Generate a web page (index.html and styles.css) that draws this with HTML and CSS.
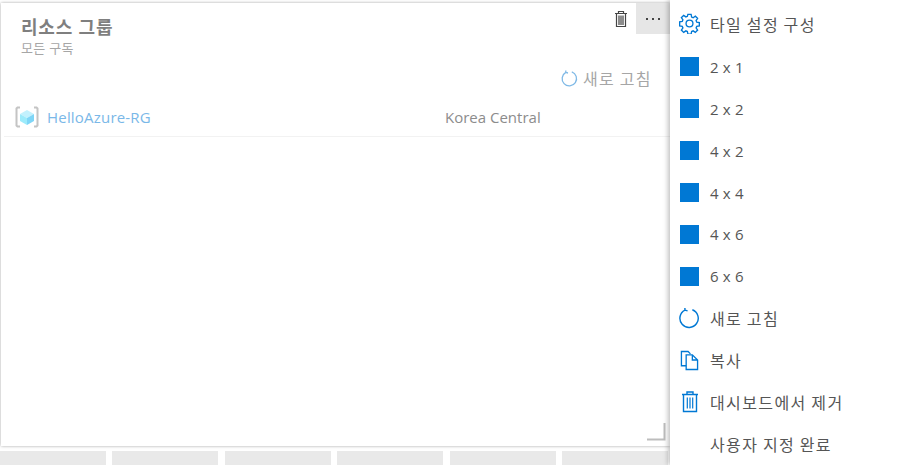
FILE: index.html
```html
<!DOCTYPE html>
<html lang="ko">
<head>
    <meta charset="UTF-8">
    <meta name="viewport" content="width=device-width, initial-scale=1.0">
    <title>리소스 그룹</title>
    <link rel="stylesheet" href="styles.css">
</head>
<body>
    <div class="page">
        <div class="board">
            <div class="tile">
                <div class="tile-actions">
                    <button class="tile-btn">
                        <svg width="16" height="18" viewBox="0 0 16 18">
                            <path d="M2 3.5h12M5.5 3.5V1.5h5v2M3.5 3.5v13h9v-13" fill="none" stroke="#444" stroke-width="1.2"/>
                            <rect x="5" y="5.5" width="6" height="9.5" fill="#8c8c8c"/>
                        </svg>
                    </button>
                    <button class="tile-btn tile-btn-active">
                        <span class="dots"><i></i><i></i><i></i></span>
                    </button>
                </div>
                <div class="tile-head">
                    <h2>리소스 그룹</h2>
                    <p>모든 구독</p>
                </div>
                <div class="refresh-row">
                    <svg width="17" height="17" viewBox="0 0 17 17">
                        <path d="M4.8 2.4A7.2 7.2 0 1 0 10.8 1.9M4.8 2.4V0.4M4.8 2.4L7 3" fill="none" stroke="#7fb9e6" stroke-width="1.3"/>
                    </svg>
                    <span>새로 고침</span>
                </div>
                <div class="res-row">
                    <svg class="res-icon" width="24" height="22" viewBox="0 0 24 22">
                        <path d="M5 1.5H2.5L1.5 2.5V19.5L2.5 20.5H5M19 1.5H21.5L22.5 2.5V19.5L21.5 20.5H19" fill="none" stroke="#c4c4c4" stroke-width="2"/>
                        <path d="M12 4L19 8L12 12L5 8Z" fill="#c3f1fd"/>
                        <path d="M5 8L12 12V19L5 15Z" fill="#9debfb"/>
                        <path d="M19 8L12 12V19L19 15Z" fill="#7fd6f7"/>
                    </svg>
                    <a class="res-name">HelloAzure-RG</a>
                    <span class="res-loc">Korea Central</span>
                </div>
                <svg class="resize-grip" width="19" height="18" viewBox="0 0 19 18">
                    <path d="M0 16.5H17.5V0" fill="none" stroke="#bdbdbd" stroke-width="2"/>
                </svg>
            </div>
            <div class="slots">
                <div class="slot"></div>
                <div class="slot"></div>
                <div class="slot"></div>
                <div class="slot"></div>
                <div class="slot"></div>
                <div class="slot"></div>
            </div>
        </div>

        <ul class="menu">
            <li>
                <span class="menu-icon">
                    <svg width="21" height="21" viewBox="0 0 22 22">
                        <path d="M9.3 1.5h3.4l.5 2.7 1.6.7 2.3-1.6 2.4 2.4-1.6 2.3.7 1.6 2.7.5v3.4l-2.7.5-.7 1.6 1.6 2.3-2.4 2.4-2.3-1.6-1.6.7-.5 2.7H9.3l-.5-2.7-1.6-.7-2.3 1.6-2.4-2.4 1.6-2.3-.7-1.6-2.7-.5V9.3l2.7-.5.7-1.6-1.6-2.3 2.4-2.4 2.3 1.6 1.6-.7z" fill="none" stroke="#0078d4" stroke-width="1.4"/>
                        <circle cx="11" cy="11" r="3.6" fill="none" stroke="#0078d4" stroke-width="1.4"/>
                    </svg>
                </span>
                타일 설정 구성
            </li>
            <li class="size-item"><span class="menu-icon"><span class="square"></span></span>2 x 1</li>
            <li class="size-item"><span class="menu-icon"><span class="square"></span></span>2 x 2</li>
            <li class="size-item"><span class="menu-icon"><span class="square"></span></span>4 x 2</li>
            <li class="size-item"><span class="menu-icon"><span class="square"></span></span>4 x 4</li>
            <li class="size-item"><span class="menu-icon"><span class="square"></span></span>4 x 6</li>
            <li class="size-item"><span class="menu-icon"><span class="square"></span></span>6 x 6</li>
            <li>
                <span class="menu-icon">
                    <svg width="21" height="21" viewBox="0 0 22 22">
                        <path d="M6.2 2.2A9.6 9.6 0 1 0 14 1.8M6.2 2.2V0M6.2 2.2L9 3" fill="none" stroke="#0078d4" stroke-width="1.5"/>
                    </svg>
                </span>
                새로 고침
            </li>
            <li>
                <span class="menu-icon">
                    <svg width="19" height="21" viewBox="0 0 20 22">
                        <path d="M6.5 16.5H1.5V1.5H8.5L11 4" fill="none" stroke="#0078d4" stroke-width="1.4"/>
                        <path d="M6.5 5H13L18.5 10.5V20.5H6.5Z M13 5V10.5H18.5" fill="none" stroke="#0078d4" stroke-width="1.4"/>
                    </svg>
                </span>
                복사
            </li>
            <li>
                <span class="menu-icon">
                    <svg width="18" height="22" viewBox="0 0 18 22">
                        <path d="M1 3.5H17M6 3.5V1H12V3.5M2.5 3.5V20.5H15.5V3.5" fill="none" stroke="#0078d4" stroke-width="1.4"/>
                        <path d="M6.3 6.5V17.5M9 6.5V17.5M11.7 6.5V17.5" fill="none" stroke="#0078d4" stroke-width="1.2"/>
                    </svg>
                </span>
                대시보드에서 제거
            </li>
            <li><span class="menu-icon"></span>사용자 지정 완료</li>
        </ul>
    </div>
</body>
</html>
```

FILE: styles.css
```css
* {
    margin: 0;
    padding: 0;
    box-sizing: border-box;
}

html, body {
    width: 912px;
    height: 465px;
    overflow: hidden;
    background: #fff;
}

body {
    font-family: "Open Sans", "Noto Sans CJK KR", sans-serif;
    color: #444;
}

.page {
    display: flex;
    height: 465px;
}

.board {
    width: 670px;
    flex-shrink: 0;
    padding-top: 3px;
}

.tile {
    position: relative;
    height: 443px;
    margin-left: 1px;
    background: #fff;
    box-shadow: 0 0 3px rgba(0, 0, 0, 0.35);
}

.tile-actions {
    position: absolute;
    top: 0;
    right: 0;
    display: flex;
}

.tile-btn {
    width: 31px;
    height: 31px;
    border: none;
    background: none;
    display: flex;
    align-items: center;
    justify-content: center;
}

.tile-btn-active {
    width: 34px;
    background: #e6e6e6;
}

.dots {
    display: flex;
    gap: 4px;
}

.dots i {
    width: 2px;
    height: 2px;
    background: #444;
}

.tile-head {
    padding: 12px 0 0 20px;
    height: 60px;
}

.tile-head h2 {
    font-size: 18px;
    line-height: 24px;
    font-weight: 700;
    letter-spacing: 0.8px;
    color: #7f7f7f;
}

.tile-head p {
    font-size: 13px;
    line-height: 18px;
    letter-spacing: 0.3px;
    color: #a6a6a6;
}

.refresh-row {
    display: flex;
    justify-content: flex-end;
    align-items: center;
    gap: 5px;
    height: 30px;
    padding-right: 18px;
    font-size: 16px;
    letter-spacing: 1.4px;
    word-spacing: -1px;
    color: #a6a6a6;
}

.res-row {
    display: flex;
    align-items: center;
    height: 40px;
    margin: 4px 0 0 3px;
    padding: 1px 0 0 11px;
    border-bottom: 1px solid #f2f2f2;
    font-size: 15px;
}

.res-icon {
    margin-right: 8px;
}

.res-name {
    width: 398px;
    letter-spacing: 0.2px;
    color: #7ab8e8;
}

.res-loc {
    color: #8c8c8c;
}

.resize-grip {
    position: absolute;
    right: 4px;
    bottom: 5px;
}

.slots {
    display: flex;
    gap: 6.4px;
    margin-top: 5px;
}

.slot {
    width: 106px;
    height: 14px;
    background: #e9e9e9;
}

.menu {
    position: relative;
    flex: 1;
    list-style: none;
    padding-top: 3px;
    background: #fff;
    box-shadow: -2px 0 5px rgba(0, 0, 0, 0.25);
    font-size: 16px;
    letter-spacing: 1.4px;
    word-spacing: -1px;
    color: #555;
}

.menu li {
    display: flex;
    align-items: center;
    height: 41.9px;
    padding-left: 9px;
}

.menu li:first-child {
    margin-bottom: 1px;
}

.menu .size-item {
    font-size: 15px;
    letter-spacing: 0.2px;
    word-spacing: 0;
}

.menu-icon {
    width: 31px;
    display: flex;
    align-items: center;
    justify-content: center;
    flex-shrink: 0;
    padding-right: 10px;
}

.square {
    width: 19px;
    height: 19px;
    flex-shrink: 0;
    background: #0078d4;
}
```
